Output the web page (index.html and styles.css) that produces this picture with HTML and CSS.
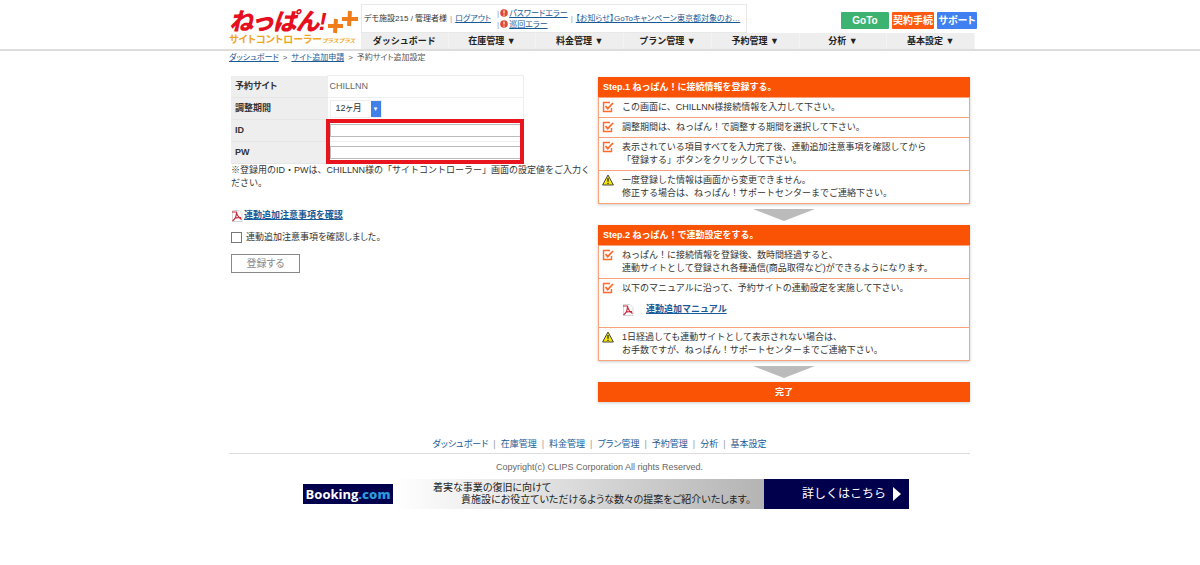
FILE: index.html
```html
<!DOCTYPE html>
<html lang="ja">
<head>
    <meta charset="UTF-8">
    <meta name="viewport" content="width=device-width, initial-scale=1.0">
    <title>予約サイト追加設定 | ねっぱん!++</title>
    <link rel="stylesheet" href="styles.css">
</head>
<body>

<!-- Shared icons -->
<svg class="sprite" aria-hidden="true">
    <symbol id="icon-check" viewBox="0 0 12 12">
        <path d="M8 1.5H1.5v9h8V7" fill="none" stroke="#ff6a2a" stroke-width="1.4"/>
        <path d="M3.5 5l2.2 2.6L11 2" fill="none" stroke="#ff6a2a" stroke-width="1.8"/>
    </symbol>
    <symbol id="icon-warn" viewBox="0 0 12 12">
        <path d="M6 1L11.4 11H.6z" fill="#f4e800" stroke="#444" stroke-width="1" stroke-linejoin="round"/>
        <path d="M6 4v3.8M6 8.8v1.2" stroke="#222" stroke-width="1.2"/>
    </symbol>
    <symbol id="icon-pdf" viewBox="0 0 12 12">
        <path d="M1.5.5h6.5l3 3v8h-9.5z" fill="#fff" stroke="#ccc" stroke-width=".8"/>
        <path d="M1 2h4.5c.3 3 2 5.5 5 7.5M5.5 3c0 3-1.5 6-4 8M3 8.5c2-1 4-1.2 7-.8" fill="none" stroke="#c8283c" stroke-width="1.2"/>
    </symbol>
    <symbol id="icon-error" viewBox="0 0 8 8">
        <circle cx="4" cy="4" r="3.8" fill="#e0443a"/>
        <path d="M4 1.5v3M4 5.5v1.2" stroke="#ffe9a0" stroke-width="1.4"/>
    </symbol>
</svg>

<!-- Header -->
<header class="header">
    <div class="wrap header-inner">
        <a href="#" class="logo">
            <span class="logo-main">ねっぱん!
                <svg class="logo-plus" viewBox="0 0 32 26" aria-hidden="true">
                    <path d="M9 10l-1 14M1 17h15M23 2l-1 15M15 10h16" stroke="#f07d1a" stroke-width="4" fill="none"/>
                </svg>
            </span>
            <span class="logo-sub">サイトコントローラー<small>プラスプラス</small></span>
        </a>
        <div class="header-body">
            <div class="header-top">
                <div class="info">
                    <span>デモ施設215 / 管理者様</span>
                    <span class="bar">|</span>
                    <a href="#">ログアウト</a>
                    <ul class="errors">
                        <li><span class="bar">|</span><svg><use href="#icon-error"/></svg><a href="#">パスワードエラー</a></li>
                        <li><span class="bar">|</span><svg><use href="#icon-error"/></svg><a href="#">巡回エラー</a></li>
                    </ul>
                    <span class="bar">|</span>
                    <a href="#" class="news">【お知らせ】GoToキャンペーン東京都対象のお…</a>
                </div>
                <div class="buttons">
                    <button type="button" class="btn btn-goto">GoTo</button>
                    <button type="button" class="btn btn-contract">契約手続</button>
                    <button type="button" class="btn btn-support">サポート</button>
                </div>
            </div>
            <nav class="nav">
                <a href="#">ダッシュボード</a>
                <a href="#">在庫管理 ▼</a>
                <a href="#">料金管理 ▼</a>
                <a href="#">プラン管理 ▼</a>
                <a href="#">予約管理 ▼</a>
                <a href="#">分析 ▼</a>
                <a href="#">基本設定 ▼</a>
            </nav>
        </div>
    </div>
</header>

<div class="wrap">
    <div class="breadcrumb">
        <a href="#">ダッシュボード</a>
        <span>&gt;</span>
        <a href="#">サイト追加申請</a>
        <span>&gt;</span>
        <span>予約サイト追加設定</span>
    </div>

    <main class="main">
        <!-- Registration form -->
        <form class="form">
            <div class="table-box">
                <table>
                    <tr>
                        <th scope="row">予約サイト</th>
                        <td>CHILLNN</td>
                    </tr>
                    <tr>
                        <th scope="row"><label for="period">調整期間</label></th>
                        <td>
                            <span class="select">
                                <select id="period"><option>12ヶ月</option></select>
                                <span class="select-arrow">▼</span>
                            </span>
                        </td>
                    </tr>
                    <tr>
                        <th scope="row"><label for="login-id">ID</label></th>
                        <td><input type="text" id="login-id"></td>
                    </tr>
                    <tr>
                        <th scope="row"><label for="login-pw">PW</label></th>
                        <td><input type="password" id="login-pw"></td>
                    </tr>
                </table>
                <div class="highlight"></div>
            </div>
            <p class="note">※登録用のID・PWは、CHILLNN様の「サイトコントローラー」画面の設定値をご入力く<br>ださい。</p>
            <p class="pdf"><svg class="icon"><use href="#icon-pdf"/></svg><a href="#">連動追加注意事項を確認</a></p>
            <div class="agree">
                <input type="checkbox" id="agree">
                <label for="agree">連動追加注意事項を確認しました。</label>
            </div>
            <button type="submit" class="submit" disabled>登録する</button>
        </form>

        <!-- Steps -->
        <div class="steps">
            <section class="step">
                <h2>Step.1 ねっぱん！に接続情報を登録する。</h2>
                <ul>
                    <li><svg class="icon"><use href="#icon-check"/></svg><p>この画面に、CHILLNN様接続情報を入力して下さい。</p></li>
                    <li><svg class="icon"><use href="#icon-check"/></svg><p>調整期間は、ねっぱん！で調整する期間を選択して下さい。</p></li>
                    <li><svg class="icon"><use href="#icon-check"/></svg><p>表示されている項目すべてを入力完了後、連動追加注意事項を確認してから<br>「登録する」ボタンをクリックして下さい。</p></li>
                    <li><svg class="icon"><use href="#icon-warn"/></svg><p>一度登録した情報は画面から変更できません。<br>修正する場合は、ねっぱん！サポートセンターまでご連絡下さい。</p></li>
                </ul>
            </section>
            <div class="arrow"></div>
            <section class="step">
                <h2>Step.2 ねっぱん！で連動設定をする。</h2>
                <ul>
                    <li><svg class="icon"><use href="#icon-check"/></svg><p>ねっぱん！に接続情報を登録後、数時間経過すると、<br>連動サイトとして登録され各種通信(商品取得など)ができるようになります。</p></li>
                    <li>
                        <svg class="icon"><use href="#icon-check"/></svg>
                        <div>
                            <p>以下のマニュアルに沿って、予約サイトの連動設定を実施して下さい。</p>
                            <p class="manual"><svg class="icon"><use href="#icon-pdf"/></svg><a href="#">連動追加マニュアル</a></p>
                        </div>
                    </li>
                    <li><svg class="icon"><use href="#icon-warn"/></svg><p>1日経過しても連動サイトとして表示されない場合は、<br>お手数ですが、ねっぱん！サポートセンターまでご連絡下さい。</p></li>
                </ul>
            </section>
            <div class="arrow"></div>
            <div class="done">完了</div>
        </div>
    </main>

    <!-- Footer -->
    <footer class="footer">
        <nav class="footer-nav">
            <a href="#">ダッシュボード</a><span>|</span>
            <a href="#">在庫管理</a><span>|</span>
            <a href="#">料金管理</a><span>|</span>
            <a href="#">プラン管理</a><span>|</span>
            <a href="#">予約管理</a><span>|</span>
            <a href="#">分析</a><span>|</span>
            <a href="#">基本設定</a>
        </nav>
        <p class="copyright">Copyright(c) CLIPS Corporation All rights Reserved.</p>
        <a href="#" class="banner">
            <span class="booking">Booking<b>.com</b></span>
            <span class="banner-text">着実な事業の復旧に向けて<span>貴施設にお役立ていただけるような数々の提案をご紹介いたします。</span></span>
            <span class="banner-more">詳しくはこちら
                <svg viewBox="0 0 8 14" aria-hidden="true"><path d="M0 0l8 7-8 7z" fill="#fff"/></svg>
            </span>
        </a>
    </footer>
</div>

</body>
</html>
```
FILE: styles.css
```css
* {
    box-sizing: border-box;
}

body {
    margin: 0;
    font-family: "Liberation Sans", "Noto Sans CJK JP", sans-serif;
    font-size: 9px;
    line-height: 13px;
    font-feature-settings: "palt";
    color: #333;
    background-color: #fff;
}

p, h2, ul {
    margin: 0;
    padding: 0;
    list-style: none;
}

a {
    color: #1a5a96;
}

button, input, select {
    font: inherit;
    font-feature-settings: inherit;
}

.sprite {
    display: none;
}

.wrap {
    max-width: 750px;
    margin: 0 auto;
    padding: 0 5px 0 4px;
}

.icon {
    flex: none;
    width: 12px;
    height: 12px;
}

/* Full-width kana */
.nav, .note, .step, .banner-more {
    font-feature-settings: normal;
}

/* Header */
.header {
    border-bottom: 2px solid #ddd;
}

.header-inner {
    display: flex;
    padding-right: 0;
}

.logo {
    flex: none;
    width: 132px;
    padding-top: 10px;
    text-decoration: none;
    white-space: nowrap;
}

.logo-main {
    display: flex;
    height: 24px;
    align-items: center;
    font-size: 24px;
    font-weight: 900;
    font-style: italic;
    line-height: 24px;
    color: #e60f1e;
}

.logo-plus {
    width: 32px;
    height: 26px;
}

.logo-sub {
    display: block;
    font-size: 10px;
    font-weight: bold;
    line-height: 12px;
    color: #f2a51c;
}

.logo-sub small {
    font-size: 6px;
    font-style: italic;
}

.header-body {
    flex: 1;
}

.header-top {
    display: flex;
    justify-content: space-between;
    align-items: flex-end;
    height: 33px;
    padding-top: 4px;
}

.info {
    display: flex;
    align-items: center;
    gap: 3px;
    width: 386px;
    height: 29px;
    padding: 0 2px;
    border: 1px solid #e8e8e8;
    font-size: 8px;
    white-space: nowrap;
}

.bar {
    color: #999;
}

.errors {
    margin-left: 3px;
    line-height: 11px;
}

.errors li {
    display: flex;
    align-items: center;
    gap: 1px;
}

.errors svg {
    width: 8px;
    height: 8px;
}

.buttons {
    display: flex;
    gap: 3px;
    margin-right: -2px;
    padding-bottom: 4px;
}

.btn {
    height: 17px;
    padding: 0;
    border: none;
    border-radius: 1px;
    font-size: 10px;
    font-weight: bold;
    line-height: 17px;
    color: #fff;
    white-space: nowrap;
}

.btn-goto {
    width: 48px;
    background-color: #3cb371;
}

.btn-contract {
    width: 42px;
    background-color: #ff5a0f;
}

.btn-support {
    width: 40px;
    background-color: #4080f0;
}

.nav {
    display: flex;
    background-color: #eee;
}

.nav a {
    flex: 1;
    border-right: 1px solid #f4f4f4;
    font-weight: bold;
    line-height: 16px;
    text-align: center;
    text-decoration: none;
    color: #222;
}

.breadcrumb {
    display: flex;
    gap: 4px;
    padding-bottom: 11px;
    font-size: 8px;
    color: #555;
}

/* Main */
.main {
    display: flex;
    justify-content: space-between;
}

.form {
    width: 352px;
    padding-left: 2px;
}

.table-box {
    position: relative;
    width: 293px;
}

table {
    width: 100%;
    border-collapse: collapse;
    table-layout: fixed;
}

tr {
    height: 22px;
}

th {
    width: 96px;
    padding: 0 4px;
    background-color: #eee;
    border-bottom: 1px solid #e6e6e6;
    text-align: left;
}

td {
    padding: 0 2px;
    border: 1px solid #eee;
    color: #666;
}

td input {
    display: block;
    width: 100%;
    height: 13px;
    padding: 0 2px;
    border: 1px solid #bbb;
}

.select {
    display: flex;
    width: 52px;
    height: 18px;
    border: 1px solid #eee;
}

.select select {
    flex: 1;
    min-width: 0;
    padding: 0 5px;
    border: none;
    background-color: #fff;
    color: #333;
    appearance: none;
}

.select-arrow {
    width: 10px;
    background-color: #4080e8;
    font-size: 6px;
    line-height: 16px;
    text-align: center;
    color: #fff;
}

/* red frame laid over the ID and PW fields */
.highlight {
    position: absolute;
    right: 0;
    bottom: 0;
    width: 198px;
    height: 45px;
    border: 4px solid #e8141e;
    pointer-events: none;
}

.note {
    white-space: nowrap;
}

.pdf {
    display: flex;
    align-items: center;
    gap: 1px;
    margin-top: 19px;
    font-weight: bold;
}

.agree {
    display: flex;
    align-items: center;
    gap: 4px;
    margin-top: 9px;
}

.agree input {
    width: 11px;
    height: 11px;
    margin: 0;
    appearance: none;
    border: 1px solid #777;
    background-color: #fff;
}

.submit {
    width: 69px;
    height: 19px;
    margin-top: 10px;
    padding: 0;
    border: 1px solid #888;
    background-color: #fff;
    font-size: 10px;
    color: #888;
}

/* Steps */
.steps {
    width: 372px;
    padding-top: 2px;
}

.step {
    border: 1px solid #f8a37c;
    border-top: none;
    box-shadow: 0 1px 3px #ccc;
}

.step h2, .done {
    margin: 0 -1px;
    padding: 0 5px;
    background-color: #fa5305;
    font-size: 9px;
    font-weight: bold;
    line-height: 20px;
    color: #fff;
}

.step li {
    display: flex;
    gap: 8px;
    padding: 3px;
    border-top: 1px solid #f8a37c;
}

.manual {
    display: flex;
    align-items: center;
    gap: 12px;
    padding: 8px 0;
    font-weight: bold;
}

.arrow {
    width: 62px;
    height: 12px;
    margin: 5px auto 4px;
    background-color: #bbb;
    clip-path: polygon(0 0, 100% 0, 50% 100%);
}

.done {
    margin: 0;
    text-align: center;
    box-shadow: 0 1px 3px #ccc;
}

/* Footer */
.footer {
    margin-top: 36px;
    text-align: center;
}

.footer-nav {
    display: flex;
    justify-content: center;
    gap: 5px;
    padding-bottom: 2px;
    border-bottom: 1px solid #ddd;
    color: #999;
}

.footer-nav a {
    text-decoration: none;
}

.copyright {
    margin-top: 7px;
    color: #666;
}

.banner {
    display: flex;
    align-items: center;
    height: 30px;
    margin: 5px 61px 0 74px;
    background: linear-gradient(to right, #fff 15%, #b4b4b4 76%);
    font-size: 10px;
    text-align: left;
    text-decoration: none;
    white-space: nowrap;
    color: #222;
}

.booking {
    width: 90px;
    background-color: #00004d;
    font-family: "Open Sans", sans-serif;
    font-size: 13px;
    font-weight: bold;
    line-height: 20px;
    text-align: center;
    color: #fff;
}

.booking b {
    color: #2a9ad8;
}

.banner-text {
    flex: 1;
    padding-left: 40px;
    line-height: 12px;
}

.banner-text span {
    display: block;
    padding-left: 28px;
}

.banner-more {
    display: flex;
    align-items: center;
    justify-content: flex-end;
    gap: 7px;
    width: 145px;
    padding-right: 8px;
    background-color: #00004d;
    font-size: 12px;
    line-height: 30px;
    color: #fff;
}

.banner-more svg {
    width: 8px;
    height: 14px;
}
```
